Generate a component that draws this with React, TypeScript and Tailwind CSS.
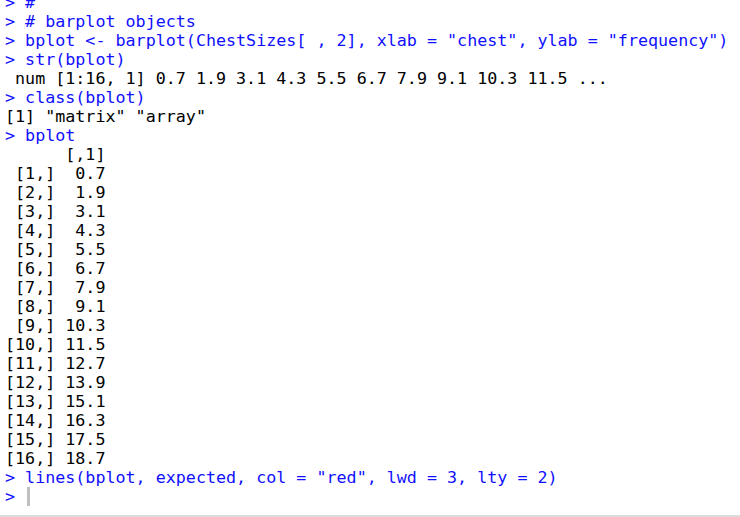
import React from 'react'

type Line = { text: string; cmd?: boolean; cursor?: boolean }

const ROWS = ['0.7', '1.9', '3.1', '4.3', '5.5', '6.7', '7.9', '9.1', '10.3', '11.5', '12.7', '13.9', '15.1', '16.3', '17.5', '18.7']

const LINES: Line[] = [
    { text: '> #', cmd: true },
    { text: '> # barplot objects', cmd: true },
    { text: '> bplot <- barplot(ChestSizes[ , 2], xlab = "chest", ylab = "frequency")', cmd: true },
    { text: '> str(bplot)', cmd: true },
    { text: ' num [1:16, 1] 0.7 1.9 3.1 4.3 5.5 6.7 7.9 9.1 10.3 11.5 ...' },
    { text: '> class(bplot)', cmd: true },
    { text: '[1] "matrix" "array"' },
    { text: '> bplot', cmd: true },
    { text: '      [,1]' },
    ...ROWS.map((v, i) => {
        const label = `[${i + 1},]`
        return { text: label.padStart(5, ' ') + ' ' + v.padStart(4, ' ') }
    }),
    { text: '> lines(bplot, expected, col = "red", lwd = 3, lty = 2)', cmd: true },
    { text: '> ', cmd: true, cursor: true },
]

const App = () => {
    return (
        <div className="w-[740px] h-[517px] overflow-hidden bg-white flex flex-col">
            <div className="flex-1 overflow-hidden border-b-2 border-[#dcdcdc]">
                <div className="-mt-[7.5px] pl-[5px] font-['DejaVu_Sans_Mono','Liberation_Mono',monospace] text-[16.7px] leading-[19px]">
                    {LINES.map((line, i) => (
                        <div key={i} className={`h-[19px] whitespace-pre flex items-center ${line.cmd ? 'text-[#1010ff]' : 'text-[#000000]'}`}>
                            <span>{line.text}</span>
                            {line.cursor && <span className="ml-[2px] w-[3px] h-[19px] bg-[#c0c0c0]" />}
                        </div>
                    ))}
                </div>
            </div>
        </div>
    )
}

export default App
